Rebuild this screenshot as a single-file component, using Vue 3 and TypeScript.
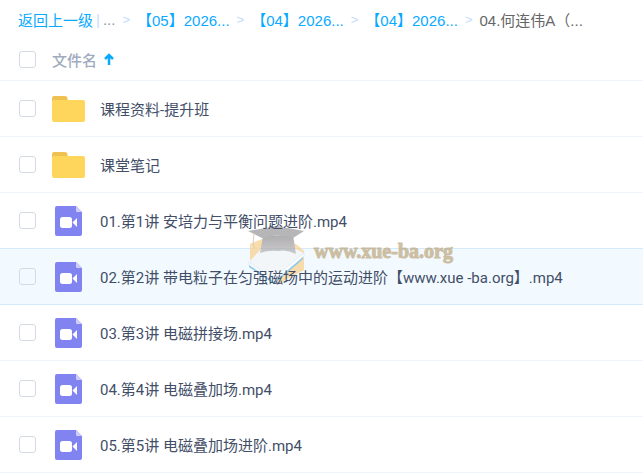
<script setup lang="ts">
import { ref } from 'vue'

interface Crumb {
  label: string
}

interface FileItem {
  id: number
  kind: 'folder' | 'video'
  name: string
}

const crumbs: Crumb[] = [
  { label: '【05】2026...' },
  { label: '【04】2026...' },
  { label: '【04】2026...' },
]

const files: FileItem[] = [
  { id: 1, kind: 'folder', name: '课程资料-提升班' },
  { id: 2, kind: 'folder', name: '课堂笔记' },
  { id: 3, kind: 'video', name: '01.第1讲 安培力与平衡问题进阶.mp4' },
  { id: 4, kind: 'video', name: '02.第2讲 带电粒子在匀强磁场中的运动进阶【www.xue -ba.org】.mp4' },
  { id: 5, kind: 'video', name: '03.第3讲 电磁拼接场.mp4' },
  { id: 6, kind: 'video', name: '04.第4讲 电磁叠加场.mp4' },
  { id: 7, kind: 'video', name: '05.第5讲 电磁叠加场进阶.mp4' },
]

const activeId = ref<number>(4)
const selected = ref<number[]>([])

function toggleAll(event: Event): void {
  const checked = (event.target as HTMLInputElement).checked
  selected.value = checked ? files.map((f) => f.id) : []
}
</script>

<template>
  <main class="browser">
    <nav class="crumbs">
      <a href="#" class="link">返回上一级</a>
      <span class="bar">|</span>
      <span class="dots">...</span>
      <template v-for="(crumb, i) in crumbs" :key="i">
        <span class="sep">&gt;</span>
        <a href="#" class="link">{{ crumb.label }}</a>
      </template>
      <span class="sep">&gt;</span>
      <span class="current">04.何连伟A（...</span>
    </nav>

    <table class="files">
      <colgroup>
        <col class="pick-col" />
        <col class="kind-col" />
        <col />
      </colgroup>
      <thead>
        <tr>
          <th class="pick">
            <input
              type="checkbox"
              class="check"
              aria-label="全选"
              :checked="selected.length === files.length"
              @change="toggleAll"
            />
          </th>
          <th colspan="2">
            <button type="button" class="sort">
              文件名
              <svg class="arrow" viewBox="0 0 10 12" aria-hidden="true">
                <path d="M5 12V2M1 6L5 2L9 6" />
              </svg>
            </button>
          </th>
        </tr>
      </thead>
      <tbody>
        <tr
          v-for="file in files"
          :key="file.id"
          :class="{ active: file.id === activeId }"
          @mouseenter="activeId = file.id"
        >
          <td class="pick">
            <input :id="`file-${file.id}`" v-model="selected" type="checkbox" class="check" :value="file.id" />
          </td>
          <td>
            <svg v-if="file.kind === 'folder'" class="icon" viewBox="0 0 34 34" aria-hidden="true">
              <path d="M0 13V6Q0 4 2 4H13Q15 4 15.500 6V13Z" fill="#efc150" />
              <rect y="8" width="33" height="22" rx="2" fill="#ffd65c" />
            </svg>
            <svg v-else class="icon" viewBox="0 0 34 34" aria-hidden="true">
              <path d="M5 2H24L30 8V30Q30 32 28 32H5Q3 32 3 30V4Q3 2 5 2Z" fill="#8083f0" />
              <path d="M24 2L30 8H25Q24 8 24 7Z" fill="#cdcefa" />
              <rect x="8" y="13" width="12" height="11" rx="2.500" fill="#fff" />
              <path d="M20.500 18.500L25 14V23Z" fill="#fff" />
            </svg>
          </td>
          <td class="name">
            <label :for="`file-${file.id}`">{{ file.name }}</label>
          </td>
        </tr>
      </tbody>
    </table>

    <div class="watermark" aria-hidden="true">
      <svg class="cap" viewBox="0 0 60 62">
        <defs>
          <linearGradient id="cap-shade" x1="0" y1="0" x2="0" y2="1">
            <stop offset="0" stop-color="#8c8b8d" />
            <stop offset="1" stop-color="#b9b7b8" />
          </linearGradient>
        </defs>
        <path d="M2 20L14 15L48 20L56 27V46L30 60L2 43Z" fill="#f8d08a" />
        <path d="M1 39L24 54L55 31V35L26 60L1 43Z" fill="#5cb2e4" />
        <path d="M1 38L14 24L48 25L56 29L26 57Z" fill="#f4f5f6" />
        <path d="M1 38L25 54L56 29V32L26 58L1 41Z" fill="#fff" stroke="#c9d7de" stroke-width=".5" />
        <path d="M15 12L45 11L48 30Q39 25 30 27Q21 26 12 29Z" fill="url(#cap-shade)" />
        <path d="M0 7L29 2L56 7L45 14Q29 9 14 14Z" fill="#98979a" />
        <path d="M6 9L5 21L7 24" fill="none" stroke="#c7b897" />
      </svg>
      <span class="site">www.xue-ba.org</span>
    </div>
  </main>
</template>

<style>
body {
  margin: 0;
  background: #fff;
}
</style>

<style scoped>
.browser {
  position: relative;
  overflow: hidden;
  font-family: Roboto, 'Noto Sans CJK SC', sans-serif;
  font-size: 15px;
  color: #424e67;
}

.crumbs {
  display: flex;
  align-items: center;
  height: 38px;
  padding-left: 18px;
  font-family: 'Liberation Sans', 'Noto Sans CJK SC', sans-serif;
  white-space: nowrap;
}

.link {
  color: #09aaff;
  text-decoration: none;
}

.bar {
  margin: 0 3px;
  color: #c4dbfe;
}

.dots {
  color: #8a95a8;
}

.sep {
  margin: 0 7px;
  font-size: 13px;
  color: #c4dbfe;
}

.current {
  color: #666;
}

.files {
  width: 100%;
  border-collapse: separate;
  border-spacing: 0;
  table-layout: fixed;
}

th,
td {
  box-sizing: border-box;
  padding: 0;
  border-bottom: 1px solid #f0f5fd;
  text-align: left;
  vertical-align: middle;
}

th {
  height: 43px;
}

td {
  height: 56px;
}

.pick-col {
  width: 52px;
}

.kind-col {
  width: 48px;
}

.pick {
  padding-left: 19px;
}

.check {
  display: block;
  appearance: none;
  box-sizing: border-box;
  width: 17px;
  height: 17px;
  margin: 0;
  border: 1px solid #d5dbe3;
  border-radius: 3px;
  background: transparent;
}

.check:checked {
  border-color: #09aaff;
  background: #09aaff;
}

.sort {
  display: flex;
  align-items: center;
  gap: 7px;
  padding: 0;
  border: 0;
  background: none;
  font: inherit;
  font-weight: 500;
  color: #a0abbe;
}

.arrow {
  width: 10px;
  height: 12px;
  fill: none;
  stroke: #09aaff;
  stroke-width: 2.5;
}

.icon {
  display: block;
  width: 34px;
  height: 34px;
}

.name {
  white-space: nowrap;
}

.name label {
  position: relative;
  z-index: 2;
}

.active td {
  background: #f2faff;
  border-color: #d5eafa;
}

tr:has(+ .active) td {
  border-color: #d5eafa;
}

.watermark {
  position: absolute;
  z-index: 1;
  top: 224px;
  left: 248px;
  display: flex;
  gap: 6px;
  opacity: 0.7;
  pointer-events: none;
}

.cap {
  width: 60px;
  height: 62px;
}

.site {
  font: bold 20px/54px 'Liberation Serif', serif;
  color: #bca67c;
  -webkit-text-stroke: 1px #bca67c;
}
</style>
